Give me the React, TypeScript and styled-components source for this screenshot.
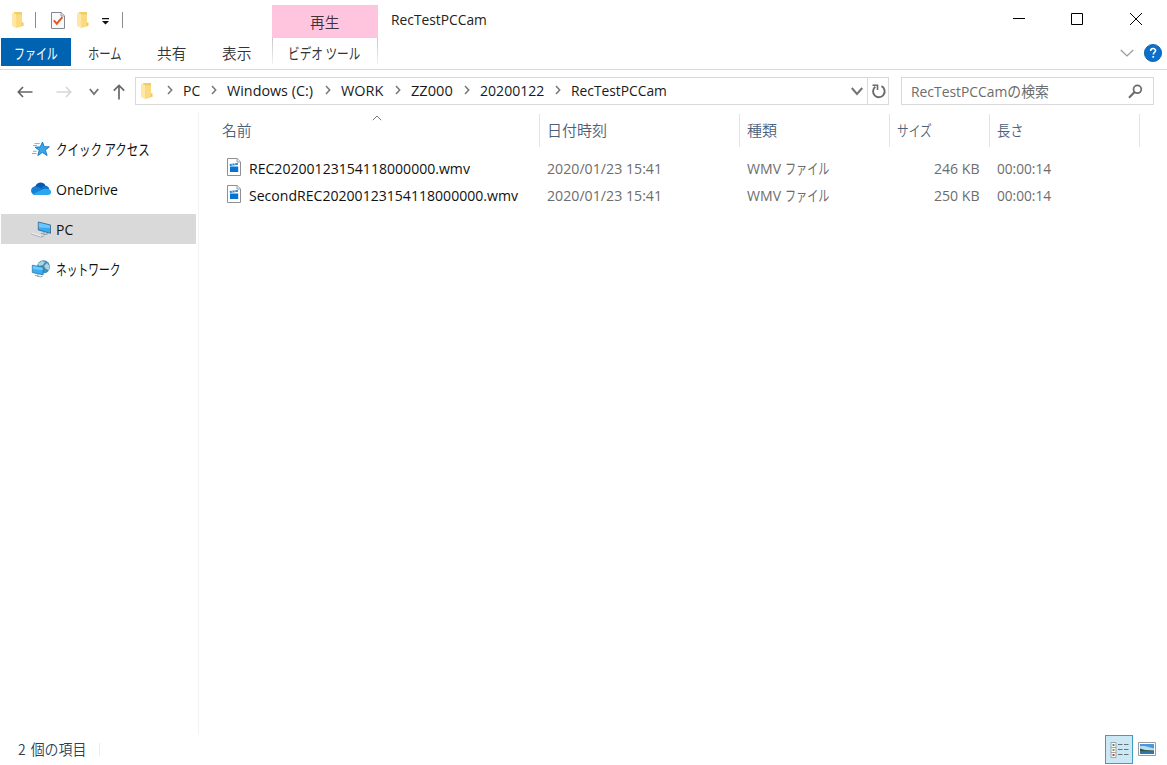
import React from 'react';
import styled, { createGlobalStyle } from 'styled-components';

const Global = createGlobalStyle`
  * { box-sizing: border-box; }
  html, body { margin: 0; background: #fff; overflow: hidden; }
  body { font-family: "Open Sans", "Noto Sans CJK JP", sans-serif; font-size: 15px; color: #1a1a1a; }
  svg { display: block; flex: none; }
`;

const Window = styled.div`
  width: 1167px;
  height: 765px;
  display: flex;
  flex-direction: column;
  background: #fff;
`;

const Label = styled.span<{ $x?: number; $jp?: boolean; $kana?: boolean; $end?: boolean }>`
  display: inline-block;
  flex: none;
  white-space: nowrap;
  line-height: 20px;
  font-size: 15px;
  font-family: ${p => (p.$jp || p.$kana ? '"Noto Sans CJK JP"' : '"Open Sans", "Noto Sans CJK JP"')}, sans-serif;
  font-weight: ${p => (p.$jp ? 350 : 400)};
  transform-origin: ${p => (p.$end ? '100%' : '0')} 50%;
  transform: scaleX(${p => p.$x ?? 0.938});
`;

const Ribbon = styled.header`
  height: 70px;
  flex: none;
  display: flex;
  border-bottom: 1px solid #dadbdc;
`;
const RibbonLeft = styled.div`
  width: 272px;
  display: flex;
  flex-direction: column;
`;
const QuickBar = styled.div`
  height: 38px;
  padding: 2px 0 0 10px;
  display: flex;
  align-items: center;
`;
const QuickSlot = styled.div<{ $w: number }>`
  width: ${p => p.$w}px;
  display: flex;
  flex: none;
`;
const Bar = styled.i`
  width: 1px;
  height: 16px;
  background: #8c8c8c;
`;
const Tabs = styled.nav`
  display: flex;
  padding-left: 1px;
  height: 28px;
`;
const Tab = styled.div<{ $w: number; $pad: number; $active?: boolean }>`
  width: ${p => p.$w}px;
  padding: 1px 0 0 ${p => p.$pad}px;
  display: flex;
  align-items: center;
  color: ${p => (p.$active ? '#fff' : '#333')};
  background: ${p => (p.$active ? '#0063b1' : 'transparent')};
`;
const ContextGroup = styled.div`
  width: 106px;
  padding-top: 5px;
`;
const ContextTitle = styled.div`
  height: 33px;
  background: #ffc4de;
  padding: 7px 0 0 38px;
  color: #40303a;
`;
const ContextTab = styled.div`
  height: 26px;
  padding: 5px 0 0 15px;
  color: #333;
  border-left: 1px solid;
  border-right: 1px solid;
  border-image: linear-gradient(#c4c4c4, #f4f4f4) 1;
`;
const RibbonRight = styled.div`
  flex: 1;
  display: flex;
  flex-direction: column;
`;
const Caption = styled.div`
  height: 38px;
  display: flex;
  padding: 9px 0 0 13px;
  color: #222;
`;
const CaptionButtons = styled.div`
  margin-left: auto;
  padding: 3px 24px 0 0;
  display: flex;
  gap: 45px;
`;
const RibbonTools = styled.div`
  display: flex;
  justify-content: flex-end;
  align-items: center;
  gap: 10px;
  height: 30px;
  padding-right: 5px;
`;

const AddressRow = styled.div`
  height: 42px;
  flex: none;
  display: flex;
  padding-top: 7px;
`;
const NavButtons = styled.div`
  width: 135px;
  height: 30px;
  padding-left: 17px;
  display: flex;
  align-items: center;
`;
const NavSlot = styled.div<{ $w: number }>`
  width: ${p => p.$w}px;
`;
const PathBox = styled.div`
  width: 754px;
  height: 28px;
  border: 1px solid #d9d9d9;
  display: flex;
  align-items: center;
  padding-left: 3px;
`;
const Crumbs = styled.div`
  display: flex;
  flex: 1;
  padding: 0 0 2px 14px;
  align-items: center;
`;
const Crumb = styled.div<{ $w: number }>`
  width: ${p => p.$w}px;
  flex: none;
  display: flex;
  align-items: center;
  gap: 10px;
`;
const Refresh = styled.div`
  width: 21px;
  height: 26px;
  margin-left: 4px;
  padding-left: 1px;
  border-left: 1px solid #d9d9d9;
  display: flex;
  align-items: center;
  justify-content: center;
`;
const SearchBox = styled.div`
  margin-left: 12px;
  width: 253px;
  height: 28px;
  border: 1px solid #d9d9d9;
  display: flex;
  align-items: center;
  justify-content: space-between;
  padding: 0 10px 0 9px;
  color: #6d6d6d;
`;

const Main = styled.div`
  flex: 1;
  display: flex;
`;
const Sidebar = styled.aside`
  width: 199px;
  height: 623px;
  padding: 22px 0 0 1px;
  border-right: 1px solid #f2f2f2;
  display: flex;
  flex-direction: column;
  gap: 10px;
`;
const SideItem = styled.div<{ $on?: boolean }>`
  width: 195px;
  height: 30px;
  padding-left: 29px;
  display: flex;
  align-items: center;
  gap: 4px;
  color: #111;
  background: ${p => (p.$on ? '#d9d9d9' : 'transparent')};
`;
const Files = styled.section`
  flex: 1;
`;
const HeadRow = styled.div`
  height: 42px;
  padding: 2px 0 0 16px;
  display: flex;
`;
const HeadCell = styled.div<{ $w: number }>`
  width: ${p => p.$w}px;
  height: 33px;
  padding: 6px 0 0 7px;
  border-right: 1px solid #e3e3e3;
  display: flex;
  color: #4c607a;
`;
const SortMark = styled.div`
  margin: -5px 0 0 120px;
`;
const FileRow = styled.div`
  height: 27px;
  padding-left: 28px;
  display: flex;
  align-items: center;
  color: #6d6d6d;
`;
const FileCell = styled.div<{ $w: number; $end?: boolean }>`
  width: ${p => p.$w}px;
  flex: none;
  display: flex;
  align-items: center;
  justify-content: ${p => (p.$end ? 'flex-end' : 'flex-start')};
`;
const FileName = styled(FileCell)`
  gap: 8px;
  color: #111;
`;
const TypeCode = styled.div`
  width: 38px;
`;
const Duration = styled(FileCell)`
  padding-left: 17px;
`;
const StatusBar = styled.footer`
  height: 30px;
  flex: none;
  display: flex;
  align-items: center;
  padding: 0 0 2px 18px;
  color: #2b3f5c;
`;
const StatusText = styled.div`
  width: 81px;
  word-spacing: 2px;
`;
const StatusRule = styled.i`
  width: 1px;
  height: 13px;
  background: #ececec;
`;
const ViewButtons = styled.div`
  margin-left: auto;
  padding-right: 11px;
  display: flex;
  align-items: center;
  gap: 5px;
`;
const ActiveView = styled.div`
  width: 28px;
  height: 29px;
  border: 1px solid #3ca0bd;
  background: #cce8f4;
  display: flex;
  align-items: center;
  justify-content: center;
`;

const Folder = () => (
  <svg width="14" height="18" viewBox="0 0 14 18">
    <path d="M4 1h8v13.500H4z" fill="#f0cd68" />
    <path d="M2 1.500l4 1.500v14L2 15z" fill="#ffe8a6" />
    <path d="M6 3.500h6v12L6 17z" fill="#fadb82" />
    <path d="M11.800 11.400h1.700v3.600h-1.700z" fill="#efc85d" />
  </svg>
);
const CheckDoc = () => (
  <svg width="16" height="19" viewBox="0 0 16 19">
    <path d="M1.500 1.500h9.700l3.300 3.300v12.700h-13z" fill="#f8f9fb" stroke="#85888e" />
    <path d="M11 1.500v3.500h3.500" fill="#dce0e5" stroke="#9a9da3" />
    <path d="M3.800 9.400l3 3.300 5.600-6.500" fill="none" stroke="#e0592b" strokeWidth="2" />
  </svg>
);
const Customize = () => (
  <svg width="9" height="9" viewBox="0 0 9 9">
    <path d="M1 2h7v1.200H1z M1 5h7L4.500 8.600z" fill="#111" />
  </svg>
);
const Arrow = ({ back, color }: { back?: boolean; color: string }) => (
  <svg width="16" height="14" viewBox="0 0 16 14">
    <path d={back ? 'M6 2L1.300 7 6 12M1.500 7h14' : 'M10 2l4.700 5L10 12M14.500 7h-14'} fill="none" stroke={color} strokeWidth="1.7" />
  </svg>
);
const Down = ({ color = '#737373', w = 10, h = 8, s = 1.8 }) => (
  <svg width={w} height={h} viewBox={`0 0 ${w} ${h}`}>
    <path d={`M.8 1L${w / 2} ${h - 2}L${w - 0.8} 1`} fill="none" stroke={color} strokeWidth={s} />
  </svg>
);
const Up = () => (
  <svg width="14" height="16" viewBox="0 0 14 16">
    <path d="M7 15.500V1.500M1.800 6.600L7 1.400l5.200 5.200" fill="none" stroke="#686868" strokeWidth="1.7" />
  </svg>
);
const Chevron = () => (
  <svg width="6" height="10" viewBox="0 0 6 10">
    <path d="M1 1l3.700 4L1 9" fill="none" stroke="#777" strokeWidth="1.5" />
  </svg>
);
const RefreshIcon = () => (
  <svg width="16" height="16" viewBox="0 0 16 16">
    <path d="M10.500 3.200A5.800 5.800 0 1 1 4.300 3.800" fill="none" stroke="#6b6b6b" strokeWidth="1.9" />
    <path d="M1.500 2.200h5v4.800" fill="none" stroke="#6b6b6b" strokeWidth="1.6" />
  </svg>
);
const Magnifier = () => (
  <svg width="15" height="15" viewBox="0 0 15 15">
    <circle cx="9.400" cy="5.300" r="3.900" fill="none" stroke="#6b6b6b" strokeWidth="1.7" />
    <path d="M6.600 8.100L1 13.700" stroke="#6b6b6b" strokeWidth="2.100" />
  </svg>
);
const Help = () => (
  <svg width="18" height="18" viewBox="0 0 18 18">
    <circle cx="9" cy="9" r="8.600" fill="#0b6fcd" stroke="#0a559d" strokeWidth=".8" />
    <path d="M6.600 6.900c0-3 5-3 5-.3 0 1.900-2.300 1.800-2.300 3.900" fill="none" stroke="#fff" strokeWidth="1.5" />
    <path d="M8.400 12h1.700v1.700H8.400z" fill="#fff" />
  </svg>
);
const Star = () => (
  <svg width="22" height="20" viewBox="0 0 22 20">
    <path d="M12.500 3l1.700 4.700 5.200.1-4 3.300 1.700 5.400-4.800-3-4.500 3.100 1.400-5.400L5 8.200l5.200-.3z" fill="#37a7ed" stroke="#1478bd" strokeWidth=".9" />
    <path d="M4.500 4.600h5.200M3 6.600h4M3 12.300h3.600M2 14.500h4.400" stroke="#66b9ea" strokeWidth="1" />
  </svg>
);
const Cloud = () => (
  <svg width="22" height="20" viewBox="0 0 22 20">
    <path d="M5.500 7C7 2.800 13.500 2.200 15.700 7l-5 5L3 9z" fill="#0a59ae" />
    <path d="M5.500 16C-.2 16-.3 8.500 4.600 7.600c3-.5 4.600 1 7.400 2.600L8 16z" fill="#1480d8" />
    <path d="M11 10c2-5.300 8.200-3.500 8.300.4L14 13z" fill="#1173cc" />
    <path d="M2.500 15.200L14 9.700c3-.2 7.100 0 7.100 3.400 0 1.900-1.200 2.900-3.200 2.900H5.500c-1.200 0-2.200-.2-3-.8z" fill="#2aa7ee" />
  </svg>
);
const Computer = () => (
  <svg width="22" height="20" viewBox="0 0 22 20">
    <path d="M8.300 3l12.200 3v8.300L8.300 11z" fill="#35a9f1" stroke="#3b6d91" strokeWidth=".9" />
    <path d="M8.800 3.700L20 6.500v2.500L8.800 8.500z" fill="#68c8ff" />
    <path d="M14 13v1.700M11 14.300l4 1.200 3-.8" stroke="#8298a8" fill="none" />
    <path d="M1 14.800l9.700 3.200 3.500-.9" fill="none" stroke="#9fabb4" strokeWidth="1" />
    <path d="M1.500 14l9.200 3" stroke="#f5f5f5" />
  </svg>
);
const Network = () => (
  <svg width="22" height="20" viewBox="0 0 22 20">
    <circle cx="13.500" cy="7.800" r="6.500" fill="#458faf" />
    <path d="M8 4.500l4-2.500 3 1-2 3-4 1zM14 7l3-3 2.500 3-.5 4-3-1z" fill="#a8d6e5" />
    <path d="M2.300 6.200l10.800 2v7.700L2.300 13.500z" fill="#37adf4" stroke="#3279a6" strokeWidth=".8" />
    <path d="M2.800 6.900l9.800 1.900v2.500L2.800 10z" fill="#6fcbff" />
    <path d="M8 15v2.500M5 16.300l5.500 1.600 2-.8" fill="none" stroke="#91a2ad" />
  </svg>
);
const VideoFile = () => (
  <svg width="14" height="19" viewBox="0 0 14 19">
    <path d="M.500.500h9.700l3.300 3.300v13.700H.500z" fill="#fff" stroke="#8e9093" />
    <path d="M10 .500v3.500h3.500" fill="#f0f0f0" stroke="#9b9da0" />
    <path d="M3 8.500h8.200V14H3z" fill="#0872cf" />
    <path d="M2.700 6.100L10.800 4.900l.3 1.900-8.200 1.100z" fill="#1a84dc" />
    <path d="M4.700 5.800l1 1.600M7.300 5.400l1 1.600" stroke="#fff" strokeWidth=".7" />
  </svg>
);
const DetailsIcon = () => (
  <svg width="19" height="17" viewBox="0 0 19 17">
    {['#4a8a92', '#7c9a4e', '#c33a2e'].map((c, i) => (
      <g key={c} transform={`translate(0 ${i * 5})`}>
        <path d="M1 1.500h5v5H1z" fill="#fff" stroke="#a3a3a3" />
        <path d="M2.500 3h2v2h-2z" fill={c} />
        <path d="M8 3.500h4.500M14 3.500h4.500" stroke="#687276" strokeWidth="1" />
      </g>
    ))}
  </svg>
);
const PictureIcon = () => (
  <svg width="18" height="14" viewBox="0 0 18 14">
    <path d="M.500.500h17v13H.500z" fill="#fff" stroke="#9b9b9b" />
    <path d="M2 2h14v10H2z" fill="#4d98dd" />
    <path d="M2 4.500c5-1.500 9 1.500 14 2V9H2z" fill="#bcdcf1" />
    <path d="M2 6.500l5 1.500 9 .5v1.200H2z" fill="#2d5449" />
    <path d="M2 9.300h14V12H2z" fill="#2f76ae" />
  </svg>
);

const crumbs = [
  { name: 'PC', w: 44, x: 0.93 },
  { name: 'Windows (C:)', w: 114, x: 0.955 },
  { name: 'WORK', w: 70, x: 0.965 },
  { name: 'ZZ000', w: 69, x: 0.975 },
  { name: '20200122', w: 91, x: 0.938 },
  { name: 'RecTestPCCam', w: 120, x: 0.92 },
];
const places = [
  { name: 'クイック アクセス', icon: <Star />, kana: true, x: 0.765 },
  { name: 'OneDrive', icon: <Cloud />, x: 0.938 },
  { name: 'PC', icon: <Computer />, on: true, x: 0.93 },
  { name: 'ネットワーク', icon: <Network />, kana: true, x: 0.715 },
];
const files = [
  { name: 'REC20200123154118000000.wmv', size: '246 KB' },
  { name: 'SecondREC20200123154118000000.wmv', size: '250 KB' },
];

export default function App() {
  return (
    <Window>
      <Global />
      <Ribbon>
        <RibbonLeft>
          <QuickBar>
            <QuickSlot $w={25}><Folder /></QuickSlot>
            <QuickSlot $w={15}><Bar /></QuickSlot>
            <QuickSlot $w={25}><CheckDoc /></QuickSlot>
            <QuickSlot $w={26}><Folder /></QuickSlot>
            <QuickSlot $w={21}><Customize /></QuickSlot>
            <Bar />
          </QuickBar>
          <Tabs>
            <Tab $w={70} $pad={13} $active><Label $kana $x={0.73}>ファイル</Label></Tab>
            <Tab $w={70} $pad={17}><Label $kana $x={0.75}>ホーム</Label></Tab>
            <Tab $w={65} $pad={16}><Label $jp $x={0.98}>共有</Label></Tab>
            <Tab $w={60} $pad={16}><Label $jp $x={0.98}>表示</Label></Tab>
          </Tabs>
        </RibbonLeft>
        <ContextGroup>
          <ContextTitle><Label $jp $x={0.98}>再生</Label></ContextTitle>
          <ContextTab><Label $kana $x={0.775}>ビデオ ツール</Label></ContextTab>
        </ContextGroup>
        <RibbonRight>
          <Caption>
            <Label $x={0.92}>RecTestPCCam</Label>
            <CaptionButtons>
              <svg width="13" height="14"><path d="M0 6.500h12" stroke="#000" /></svg>
              <svg width="13" height="14"><path d="M.500 1.500h11v11H.500z" fill="none" stroke="#000" /></svg>
              <svg width="14" height="14"><path d="M1 1l12 12M13 1L1 13" stroke="#000" /></svg>
            </CaptionButtons>
          </Caption>
          <RibbonTools><Down color="#999" w={14} h={9} s={1.2} /><Help /></RibbonTools>
        </RibbonRight>
      </Ribbon>

      <AddressRow>
        <NavButtons>
          <NavSlot $w={39}><Arrow back color="#666" /></NavSlot>
          <NavSlot $w={33}><Arrow color="#d6d6d6" /></NavSlot>
          <NavSlot $w={23}><Down /></NavSlot>
          <Up />
        </NavButtons>
        <PathBox>
          <Folder />
          <Crumbs>
            {crumbs.map(c => (
              <Crumb key={c.name} $w={c.w}><Chevron /><Label $x={c.x}>{c.name}</Label></Crumb>
            ))}
          </Crumbs>
          <Down w={12} h={9} s={2} />
          <Refresh><RefreshIcon /></Refresh>
        </PathBox>
        <SearchBox><Label $x={0.925}>RecTestPCCamの検索</Label><Magnifier /></SearchBox>
      </AddressRow>

      <Main>
        <Sidebar>
          {places.map(p => (
            <SideItem key={p.name} $on={p.on}>{p.icon}<Label $kana={p.kana} $x={p.x}>{p.name}</Label></SideItem>
          ))}
        </Sidebar>
        <Files>
          <HeadRow>
            <HeadCell $w={325}>
              <Label $jp $x={0.98}>名前</Label>
              <SortMark>
                <svg width="10" height="6"><path d="M.800 5.200L5 1l4.200 4.200" fill="none" stroke="#777" /></svg>
              </SortMark>
            </HeadCell>
            <HeadCell $w={200}><Label $jp $x={1}>日付時刻</Label></HeadCell>
            <HeadCell $w={150}><Label $jp $x={1}>種類</Label></HeadCell>
            <HeadCell $w={100}><Label $jp $x={0.78}>サイズ</Label></HeadCell>
            <HeadCell $w={150}><Label $jp $x={0.88}>長さ</Label></HeadCell>
          </HeadRow>
          {files.map(f => (
            <FileRow key={f.name}>
              <FileName $w={320}><VideoFile /><Label>{f.name}</Label></FileName>
              <FileCell $w={200}><Label $x={0.945}>2020/01/23 15:41</Label></FileCell>
              <FileCell $w={133}><TypeCode><Label>WMV</Label></TypeCode><Label $kana $x={0.74}>ファイル</Label></FileCell>
              <FileCell $w={100} $end><Label $end $x={0.94}>{f.size}</Label></FileCell>
              <Duration $w={100}><Label $x={0.91}>00:00:14</Label></Duration>
            </FileRow>
          ))}
        </Files>
      </Main>

      <StatusBar>
        <StatusText><Label $jp $x={0.93}>2 個の項目</Label></StatusText>
        <StatusRule />
        <ViewButtons>
          <ActiveView><DetailsIcon /></ActiveView>
          <PictureIcon />
        </ViewButtons>
      </StatusBar>
    </Window>
  );
}
